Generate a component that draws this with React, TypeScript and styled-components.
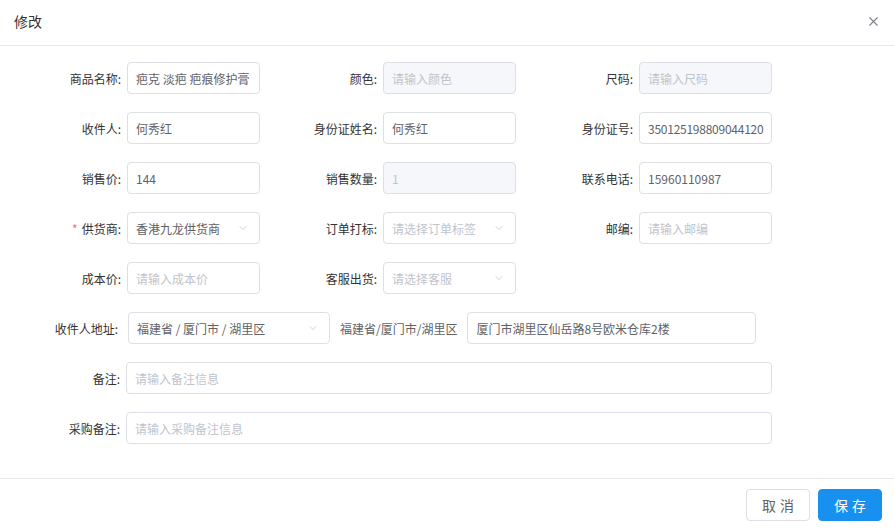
import styled, { createGlobalStyle } from "styled-components";
import { ChevronDown, X } from "lucide-react";

const GlobalStyle = createGlobalStyle`
  html, body {
    margin: 0;
    padding: 0;
    background: #fff;
    font-family: "Microsoft YaHei", "Noto Sans CJK SC", "Noto Sans", sans-serif;
    font-size: 12px;
    color: #333;
  }
  * { box-sizing: border-box; }
`;

const Dialog = styled.div`
  width: 894px;
  height: 529px;
  display: flex;
  flex-direction: column;
  background: #fff;
`;

const Header = styled.div`
  height: 46px;
  display: flex;
  align-items: center;
  justify-content: space-between;
  padding: 0 13px 3px 14px;
  border-bottom: 1px solid #e8e8e8;
`;

const Title = styled.span`
  font-size: 14px;
  color: #333;
`;

const Close = styled.span`
  display: flex;
  color: #7d8087;
`;

const Body = styled.div`
  flex: 1;
  padding: 16px 0 0 21px;
  display: flex;
  flex-direction: column;
  gap: 18px;
`;

const Row = styled.div`
  display: flex;
  align-items: center;
  height: 32px;
`;

const Field = styled.div`
  width: 256px;
  display: flex;
  align-items: center;
`;

const Label = styled.label<{ $w?: number; $pad?: number }>`
  width: ${(p) => p.$w ?? 106}px;
  padding-right: ${(p) => p.$pad ?? 6}px;
  text-align: right;
  color: #333;
  white-space: nowrap;
  flex-shrink: 0;
`;

const Star = styled.span`
  color: #f56c6c;
  margin-right: 4px;
`;

const Box = styled.div<{ $w?: number; $disabled?: boolean }>`
  width: ${(p) => p.$w ?? 133}px;
  height: 32px;
  border: 1px solid #dcdfe6;
  border-radius: 4px;
  background: ${(p) => (p.$disabled ? "#f5f7fa" : "#fff")};
  display: flex;
  align-items: center;
  justify-content: space-between;
  padding: 0 10px 0 8px;
  flex-shrink: 0;
  overflow: hidden;
`;

const Value = styled.span<{ $placeholder?: boolean; $tight?: boolean }>`
  color: ${(p) => (p.$placeholder ? "#c0c4cc" : "#606266")};
  white-space: nowrap;
  letter-spacing: ${(p) => (p.$tight ? "-0.25px" : "normal")};
  margin-right: ${(p) => (p.$tight ? "-8px" : "0")};
`;

const Arrow = styled.span`
  display: flex;
  color: #c0c4cc;
  flex-shrink: 0;
`;

const Plain = styled.span`
  color: #606266;
  margin: 0 10px;
  white-space: nowrap;
`;

const Footer = styled.div`
  height: 51px;
  border-top: 1px solid #e8e8e8;
  display: flex;
  align-items: flex-start;
  justify-content: flex-end;
  gap: 8px;
  padding: 10px 12px 0 0;
`;

const Button = styled.button<{ $primary?: boolean }>`
  width: 64px;
  height: 32px;
  border-radius: 4px;
  font-family: inherit;
  font-size: 14px;
  letter-spacing: 4px;
  padding: 0 0 0 4px;
  border: 1px solid ${(p) => (p.$primary ? "#1890ef" : "#dcdfe6")};
  background: ${(p) => (p.$primary ? "#1890ef" : "#fff")};
  color: ${(p) => (p.$primary ? "#fff" : "#606266")};
`;

type InputProps = {
  value?: string;
  placeholder?: string;
  disabled?: boolean;
  select?: boolean;
  tight?: boolean;
  w?: number;
};

const Input = ({ value, placeholder, disabled, select, tight, w }: InputProps) => (
  <Box $w={w} $disabled={disabled}>
    <Value $placeholder={!value} $tight={tight}>
      {value || placeholder}
    </Value>
    {select && (
      <Arrow>
        <ChevronDown size={12} strokeWidth={1.5} />
      </Arrow>
    )}
  </Box>
);

export default function App() {
  return (
    <>
      <GlobalStyle />
      <Dialog>
        <Header>
          <Title>修改</Title>
          <Close>
            <X size={15} strokeWidth={1.7} />
          </Close>
        </Header>
        <Body>
          <Row>
            <Field>
              <Label>商品名称:</Label>
              <Input value="疤克 淡疤 疤痕修护膏" />
            </Field>
            <Field>
              <Label>颜色:</Label>
              <Input placeholder="请输入颜色" disabled />
            </Field>
            <Field>
              <Label>尺码:</Label>
              <Input placeholder="请输入尺码" disabled />
            </Field>
          </Row>
          <Row>
            <Field>
              <Label>收件人:</Label>
              <Input value="何秀红" />
            </Field>
            <Field>
              <Label>身份证姓名:</Label>
              <Input value="何秀红" />
            </Field>
            <Field>
              <Label>身份证号:</Label>
              <Input value="350125198809044120" tight />
            </Field>
          </Row>
          <Row>
            <Field>
              <Label>销售价:</Label>
              <Input value="144" />
            </Field>
            <Field>
              <Label>销售数量:</Label>
              <Box $disabled>
                <Value $placeholder>1</Value>
              </Box>
            </Field>
            <Field>
              <Label>联系电话:</Label>
              <Input value="15960110987" />
            </Field>
          </Row>
          <Row>
            <Field>
              <Label>
                <Star>*</Star>供货商:
              </Label>
              <Input value="香港九龙供货商" select />
            </Field>
            <Field>
              <Label>订单打标:</Label>
              <Input placeholder="请选择订单标签" select />
            </Field>
            <Field>
              <Label>邮编:</Label>
              <Input placeholder="请输入邮编" />
            </Field>
          </Row>
          <Row>
            <Field>
              <Label>成本价:</Label>
              <Input placeholder="请输入成本价" />
            </Field>
            <Field>
              <Label>客服出货:</Label>
              <Input placeholder="请选择客服" select />
            </Field>
          </Row>
          <Row>
            <Label $w={107} $pad={10}>收件人地址:</Label>
            <Input value="福建省 / 厦门市 / 湖里区" select w={202} />
            <Plain>福建省/厦门市/湖里区</Plain>
            <Input value="厦门市湖里区仙岳路8号欧米仓库2楼" w={289} />
          </Row>
          <Row>
            <Label $w={105}>备注:</Label>
            <Input placeholder="请输入备注信息" w={646} />
          </Row>
          <Row>
            <Label $w={105}>采购备注:</Label>
            <Input placeholder="请输入采购备注信息" w={646} />
          </Row>
        </Body>
        <Footer>
          <Button>取消</Button>
          <Button $primary>保存</Button>
        </Footer>
      </Dialog>
    </>
  );
}
